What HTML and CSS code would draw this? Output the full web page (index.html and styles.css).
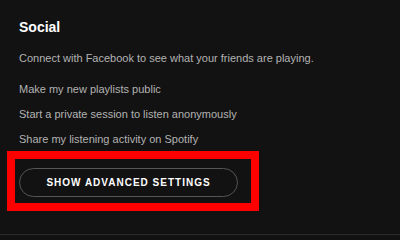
FILE: index.html
```html
<!DOCTYPE html>
<html>
<head>
<meta charset="utf-8">
<link rel="stylesheet" href="styles.css">
</head>
<body>
<div class="page">
  <h2 class="title">Social</h2>
  <p class="desc">Connect with Facebook to see what your friends are playing.</p>
  <ul class="options">
    <li>Make my new playlists public</li>
    <li>Start a private session to listen anonymously</li>
    <li>Share my listening activity on Spotify</li>
  </ul>
  <div class="highlight">
    <button class="adv">SHOW ADVANCED SETTINGS</button>
  </div>
</div>
<div class="divider"></div>
</body>
</html>
```
FILE: styles.css
```css
html, body {
  margin: 0;
  padding: 0;
  background: #121212;
  font-family: "Liberation Sans", Arial, sans-serif;
  width: 400px;
  height: 236px;
  overflow: hidden;
}
.page {
  padding: 17px 0 0 19px;
  height: 216px;
}
.title {
  margin: 0;
  font-size: 14px;
  line-height: 20px;
  font-weight: bold;
  color: #ffffff;
}
.desc {
  margin: 11px 0 0;
  font-size: 11px;
  line-height: 20px;
  color: #b3b3b3;
}
.options {
  list-style: none;
  margin: 11px 0 0;
  padding: 0;
  display: flex;
  flex-direction: column;
  gap: 5px;
}
.options li {
  font-size: 11px;
  line-height: 20px;
  color: #b3b3b3;
}
.highlight {
  display: inline-block;
  margin: 2px 0 0 -12px;
  border: 8px solid #ff0000;
  padding: 9px 13px 6px 4px;
}
.adv {
  display: block;
  width: 219px;
  height: 29px;
  border: 1px solid #555555;
  border-radius: 15px;
  background: transparent;
  color: #ffffff;
  font-family: "Liberation Sans", Arial, sans-serif;
  font-size: 10px;
  font-weight: bold;
  letter-spacing: 1px;
  padding: 0;
  text-align: center;
}
.divider {
  margin-top: 1px;
  height: 1px;
  background: #2a2a2a;
}
```
